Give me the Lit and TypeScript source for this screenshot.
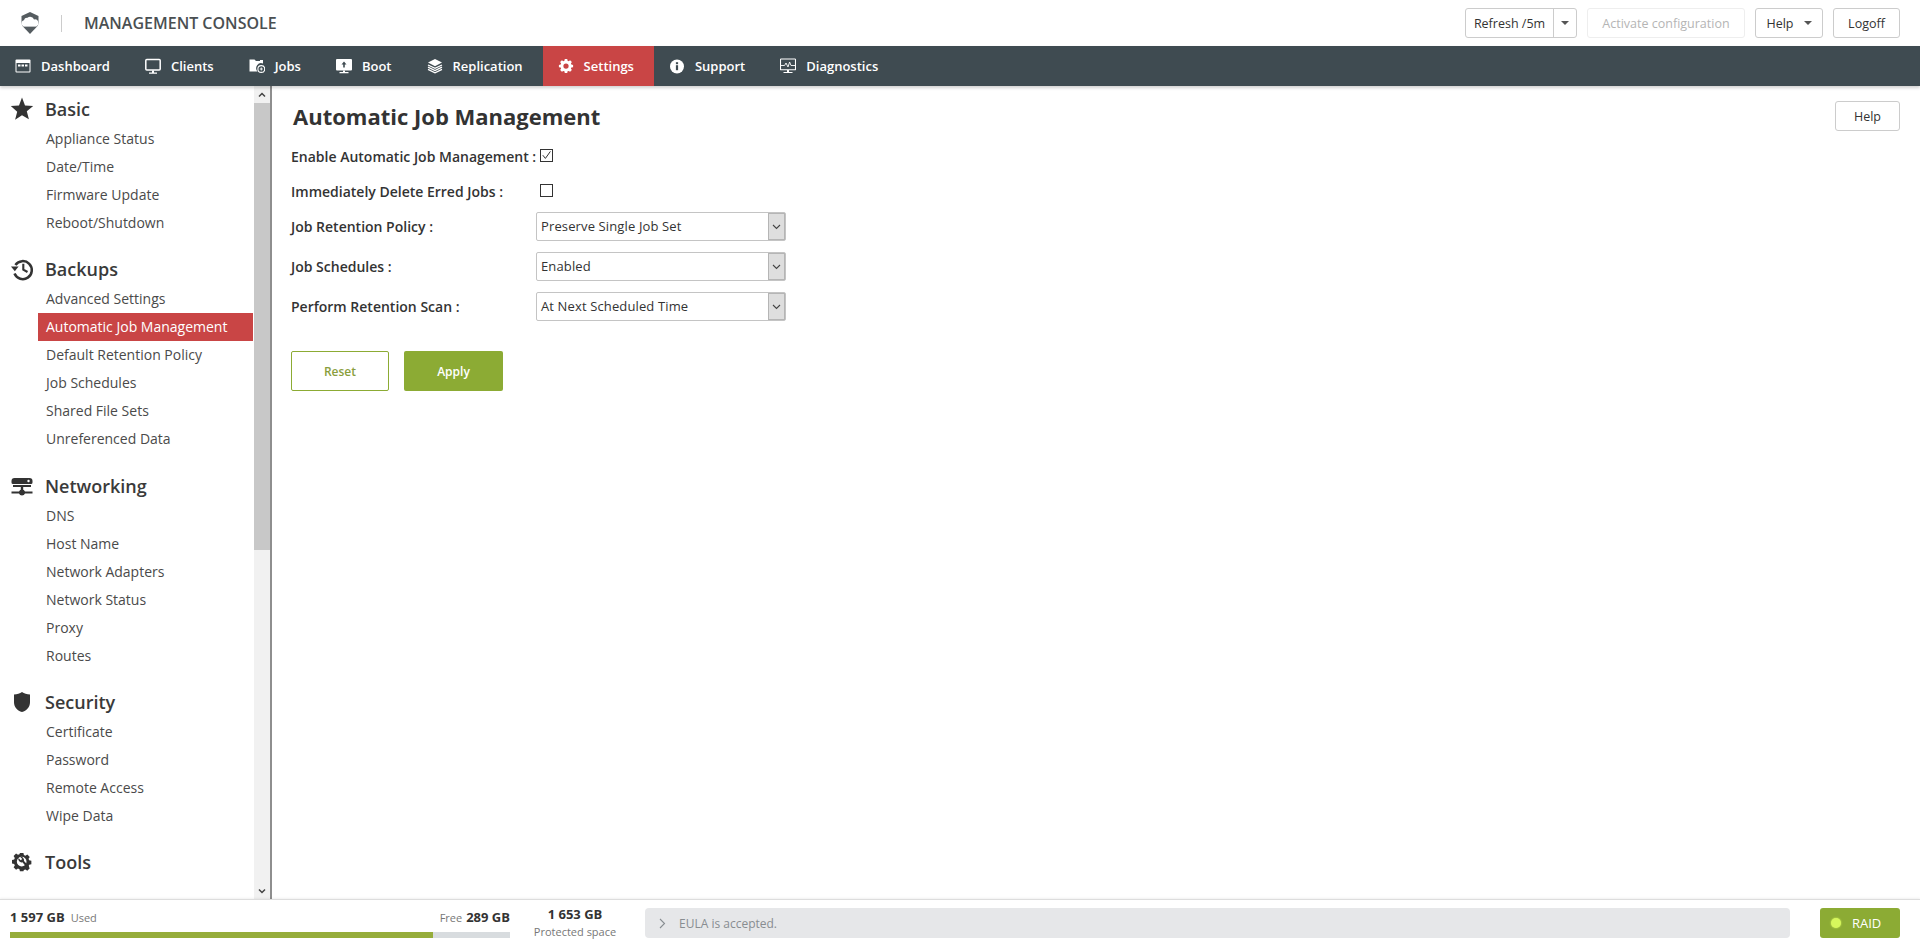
import { LitElement, html, css, svg } from "lit";
import { customElement } from "lit/decorators.js";

const navIcons: Record<string, unknown> = {
  dashboard: svg`<rect x="0.5" y="1.5" width="15" height="13" rx="1" fill="#fff"/><rect x="1.5" y="5" width="13" height="8.5" fill="#3f4b51"/><rect x="3" y="6.5" width="2.5" height="2" fill="#fff"/><rect x="6.5" y="6.500" width="2.5" height="2" fill="#fff"/><rect x="10" y="6.5" width="2.5" height="2" fill="#fff"/>`,
  clients: svg`<rect x="0.8" y="1.5" width="14.4" height="10.5" rx="1" fill="none" stroke="#fff" stroke-width="1.5"/><path d="M7 12.5h2v2H7zM4 14.500h8v1.200H4z" fill="#fff"/>`,
  jobs: svg`<path d="M0.5 1.5h5L7 3h4V2h3v3.500a5 5 0 0 0-5.500 8H.5z" fill="#fff"/><circle cx="12.300" cy="11" r="3.400" fill="none" stroke="#fff" stroke-width="1.100"/><path d="M10.800 11h3M12.300 9.500v3" stroke="#fff" stroke-width="0.900"/>`,
  boot: svg`<rect x="0" y="1" width="16" height="11.500" rx="1" fill="#fff"/><path d="M8 3.500l2.500 3H8.800v3H7.200v-3H5.500z" fill="#3f4b51"/><path d="M7 12.500h2v2H7zM3.500 14h9v1.300h-9z" fill="#fff"/>`,
  replication: svg`<path d="M8 1l7 3.600-7 3.600-7-3.600z" fill="#fff"/><path d="M1 7l7 3.400L15 7M1 9.200l7 3.400 7-3.400M1 11.400l7 3.400 7-3.400" fill="none" stroke="#fff" stroke-width="1.300"/>`,
  settings: svg`<path fill="#fff" fill-rule="evenodd" d="M6.600 1h2.800l.4 2 1.200.5 1.700-1.100 2 2-1.100 1.700.5 1.200 2 .4v2.600l-2 .4-.5 1.200 1.100 1.700-2 2-1.700-1.100-1.200.5-.4 2H6.600l-.4-2-1.200-.5-1.700 1.100-2-2 1.100-1.700-.5-1.200-2-.4V7.700l2-.4.5-1.200-1.100-1.700 2-2 1.700 1.100 1.200-.5zM8 6a3 3 0 1 0 0 6 3 3 0 0 0 0-6z" transform="translate(1 .2) scale(.875)"/>`,
  support: svg`<circle cx="8" cy="8.500" r="7" fill="#fff"/><rect x="6.900" y="7.200" width="2.200" height="5" fill="#3f4b51"/><rect x="6.900" y="4.200" width="2.200" height="2" fill="#3f4b51"/>`,
  diagnostics: svg`<rect x="0.500" y="1" width="15" height="10.800" rx="0.600" fill="none" stroke="#fff" stroke-width="1.100"/><path d="M1 7.500h3.600L6 5l2 4 1.600-5L11 7.500h4.400" fill="none" stroke="#fff" stroke-width="0.900"/><path d="M7 12h2v2H7zM3.500 14h9v1.100h-9z" fill="#fff"/>`,
};

const sideIcons: Record<string, unknown> = {
  star: svg`<path d="M11 -0.500l3 7.900 8.200.5-6.400 5.300 2.100 8.100L11 17.300l-6.900 4.500 2.100-8.100L-.2 7.900 8 7.400z" fill="#333"/>`,
  history: svg`<path d="M4.400 7a9 9 0 1 1-.9 8.600" fill="none" stroke="#333" stroke-width="2.500"/><path d="M0 8.500h7.600L3.800 13.200z" fill="#333"/><path d="M12.300 5.800v5.800l4.200 2.400" fill="none" stroke="#333" stroke-width="2.100"/>`,
  network: svg`<path d="M3.500 3h15a3 3 0 0 1 3 3v1.500A1.500 1.500 0 0 1 20 9H2A1.500 1.500 0 0 1 .5 7.500V6a3 3 0 0 1 3-3z" fill="#333"/><rect x="2" y="10" width="18" height="2" fill="#333"/><circle cx="17.500" cy="6" r="1.200" fill="#fff"/><path d="M.5 16.500H8a3.200 3.200 0 0 1 6 0h7.500v2H14a3.200 3.200 0 0 1-6 0H.5z" fill="#333"/><rect x="9.800" y="12" width="2.400" height="4" fill="#333"/>`,
  shield: svg`<path d="M11 1c2 1.600 5 2.400 8 2.600v7.600c0 4.800-3.600 8.600-8 9.800-4.400-1.200-8-5-8-9.800V3.600C6 3.400 9 2.600 11 1z" fill="#333"/>`,
  tools: svg`<g transform="translate(1 1)"><path fill="#333" fill-rule="evenodd" d="M9 1h4l.5 2.500 1.700.7 2.200-1.400 2.800 2.800-1.400 2.200.7 1.700 2.500.5v4l-2.500.5-.7 1.700 1.400 2.200-2.800 2.800-2.200-1.400-1.700.7L13 22H9l-.5-2.500-1.700-.7-2.200 1.400-2.800-2.800 1.400-2.200-.7-1.700L0 13V9l2.500-.5.7-1.700-1.400-2.200L4.600 1.800l2.200 1.400 1.700-.7zM11 5.500a5.500 5.500 0 1 0 0 11 5.500 5.500 0 0 0 0-11z" transform="scale(.88)"/><path d="M6.500 6a3.300 3.300 0 0 0 4 4.300l4.800 5.900 1.900-1.700-5.200-5.600A3.300 3.300 0 0 0 8.300 4.900l2 2-1.600 1.400z" fill="#333"/></g>`,
};

const NAV = [
  { label: "Dashboard", icon: "dashboard" },
  { label: "Clients", icon: "clients" },
  { label: "Jobs", icon: "jobs" },
  { label: "Boot", icon: "boot" },
  { label: "Replication", icon: "replication" },
  { label: "Settings", icon: "settings", active: true },
  { label: "Support", icon: "support" },
  { label: "Diagnostics", icon: "diagnostics" },
];

const GROUPS = [
  { title: "Basic", icon: "star", items: ["Appliance Status", "Date/Time", "Firmware Update", "Reboot/Shutdown"] },
  {
    title: "Backups",
    icon: "history",
    items: ["Advanced Settings", "Automatic Job Management", "Default Retention Policy", "Job Schedules", "Shared File Sets", "Unreferenced Data"],
  },
  { title: "Networking", icon: "network", items: ["DNS", "Host Name", "Network Adapters", "Network Status", "Proxy", "Routes"] },
  { title: "Security", icon: "shield", items: ["Certificate", "Password", "Remote Access", "Wipe Data"] },
  { title: "Tools", icon: "tools", items: [] as string[] },
];

@customElement("app-root")
export class AppRoot extends LitElement {
  static styles = css`
    :host {
      display: grid;
      grid-template-rows: 46px 40px 1fr 47px;
      height: 100vh;
      overflow: hidden;
      background: #fff;
      color: #333;
      font-family: "Open Sans", "Liberation Sans", sans-serif;
      font-size: 13px;
    }

    .top {
      display: flex;
      align-items: center;
      padding: 0 20px;
    }
    .logo {
      width: 20px;
      height: 22px;
      flex: none;
    }
    .sep {
      width: 1px;
      height: 17px;
      background: #ccc;
      margin: 0 22px 0 21px;
    }
    .console {
      font-size: 16px;
      font-weight: 600;
      color: #4a4f52;
      flex: 1;
    }
    .actions {
      display: flex;
      gap: 10px;
    }
    .btn {
      height: 30px;
      box-sizing: border-box;
      border: 1px solid #ccc;
      border-radius: 3px;
      display: flex;
      align-items: center;
      justify-content: center;
      font-size: 12.5px;
      color: #333;
      background: #fff;
    }
    .refresh {
      width: 112px;
    }
    .refresh .txt {
      width: 87px;
      text-align: center;
    }
    .refresh .drop {
      flex: 1;
      align-self: stretch;
      border-left: 1px solid #ccc;
      display: flex;
      align-items: center;
      justify-content: center;
    }
    .caret {
      width: 0;
      height: 0;
      border: 4px solid transparent;
      border-top: 4px solid #555;
      border-bottom: 0;
    }
    .activate {
      width: 158px;
      border-color: #eee;
      color: #b5b5b5;
    }
    .helpdrop {
      width: 68px;
      gap: 10px;
    }
    .logoff {
      width: 67px;
    }

    nav {
      display: flex;
      background: #3f4b51;
      box-shadow: 0 2px 3px rgba(0, 0, 0, 0.18);
      position: relative;
      z-index: 2;
    }
    .nav-item {
      display: flex;
      align-items: center;
      gap: 10px;
      padding: 0 20px 0 15px;
      color: #fff;
      font-weight: 600;
      font-size: 13px;
    }
    .nav-item.active {
      background: #c94545;
    }
    .nav-item svg {
      width: 16px;
      height: 16px;
      flex: none;
    }

    .body {
      display: flex;
      min-height: 0;
    }
    .side {
      width: 254px;
      flex: none;
      padding-top: 7px;
      overflow: hidden;
      box-sizing: border-box;
    }
    .group {
      margin-bottom: 16.3px;
    }
    .group-head {
      height: 32px;
      display: flex;
      align-items: center;
      gap: 12px;
      padding-left: 11px;
      font-size: 18px;
      font-weight: 600;
      color: #3a3a3a;
    }
    .group-head svg {
      width: 22px;
      height: 22px;
      flex: none;
      overflow: visible;
    }
    .side-item {
      height: 28px;
      line-height: 28px;
      margin-left: 38px;
      padding-left: 8px;
      color: #4a4a4a;
      font-size: 14px;
      white-space: nowrap;
    }
    .side-item.sel {
      background: #c94545;
      color: #fff;
      margin-right: 1px;
    }

    .scroll {
      width: 16px;
      flex: none;
      background: #f1f1f1;
      display: flex;
      flex-direction: column;
      border-right: 2px solid #8e8e8e;
    }
    .scroll .arrow {
      height: 17px;
      flex: none;
      display: flex;
      align-items: center;
      justify-content: center;
    }
    .scroll .thumb {
      height: 447px;
      flex: none;
      background: #c8c8c8;
    }
    .scroll .rest {
      flex: 1;
    }
    .scroll svg {
      width: 8px;
      height: 6px;
    }

    main {
      flex: 1;
      padding: 15px 20px 0 19px;
      min-width: 0;
    }
    .title-row {
      display: flex;
      justify-content: space-between;
      align-items: center;
      height: 30px;
      margin-bottom: 7px;
    }
    h1 {
      margin: 0 0 0 2px;
      font-size: 22px;
      font-weight: 700;
      color: #333;
    }
    .help {
      width: 65px;
    }
    .row {
      display: grid;
      grid-template-columns: 245px 250px;
      align-items: center;
      font-size: 14px;
      font-weight: 600;
      color: #333;
      white-space: nowrap;
    }
    .row.check {
      height: 35px;
    }
    .row.check > div {
      padding-top: 2px;
    }
    .row.pick {
      height: 29px;
      margin-top: 11px;
    }
    .row.check + .row.pick {
      margin-top: 4px;
    }
    .box {
      width: 13px;
      height: 13px;
      margin-left: 4px;
      box-sizing: border-box;
      border: 1px solid #333;
      display: block;
      background: #fff;
    }
    .select {
      height: 29px;
      box-sizing: border-box;
      border: 1px solid #c4c4c4;
      border-radius: 2px;
      display: flex;
      align-items: center;
      padding-left: 4px;
      font-size: 13px;
      font-weight: 400;
      letter-spacing: 0.13px;
      color: #333;
    }
    .select span {
      flex: 1;
      padding-bottom: 2px;
    }
    .select .dd {
      width: 17px;
      height: 27px;
      background: #dedede;
      border: 1px solid #b5b5b5;
      box-sizing: border-box;
      display: flex;
      align-items: center;
      justify-content: center;
    }
    .select svg {
      width: 9px;
      height: 6px;
    }
    .form-btns {
      display: flex;
      gap: 15px;
      margin-top: 30px;
    }
    .form-btns div {
      height: 40px;
      box-sizing: border-box;
      border-radius: 2px;
      display: flex;
      align-items: center;
      justify-content: center;
      font-size: 12px;
      font-weight: 600;
    }
    .reset {
      width: 98px;
      border: 1px solid #8cab34;
      color: #8a9e3c;
    }
    .apply {
      width: 99px;
      background: #8cab34;
      color: #fff;
    }

    footer {
      border-top: 1px solid #ddd;
      box-shadow: 0 -1px 2px rgba(0, 0, 0, 0.06);
      display: flex;
      align-items: center;
      padding: 0 20px 0 10px;
      position: relative;
      z-index: 2;
      background: #fff;
    }
    .usage {
      width: 500px;
      flex: none;
    }
    .usage-txt {
      display: flex;
      justify-content: space-between;
      align-items: baseline;
      height: 18px;
      margin-bottom: 5px;
      position: relative;
      top: -1px;
    }
    .small {
      font-size: 11px;
      color: #777;
      font-weight: 400;
    }
    .usage .used {
      margin-left: 6px;
    }
    .usage .free {
      margin-right: 4px;
    }
    b {
      font-size: 13px;
      font-weight: 700;
      color: #333;
    }
    .bar {
      height: 6px;
      background: #d8dcdf;
    }
    .bar div {
      height: 100%;
      background: #96ad3b;
    }
    .protected {
      width: 130px;
      margin-right: 5px;
      flex: none;
      text-align: center;
      line-height: 17px;
    }
    .eula {
      flex: 1;
      height: 30px;
      background: #e6e7e9;
      border-radius: 4px;
      display: flex;
      align-items: center;
      gap: 13px;
      padding-left: 14px;
      font-size: 12px;
      color: #888d91;
    }
    .eula svg {
      width: 7px;
      height: 11px;
    }
    .raid {
      width: 80px;
      height: 30px;
      margin-left: 30px;
      flex: none;
      background: #8cab34;
      border-radius: 3px;
      display: flex;
      align-items: center;
      gap: 11px;
      padding-left: 11px;
      box-sizing: border-box;
      color: #fff;
      font-size: 13px;
      font-weight: 400;
    }
    .dot {
      width: 10px;
      height: 10px;
      border-radius: 50%;
      background: #d6f75c;
      box-shadow: 0 0 2px #d6f75c;
    }
  `;

  private navItem(n: (typeof NAV)[number]) {
    return html`<div class="nav-item ${n.active ? "active" : ""}">
      <svg viewBox="0 0 16 16">${navIcons[n.icon]}</svg>${n.label}
    </div>`;
  }

  private group(g: (typeof GROUPS)[number]) {
    return html`<div class="group">
      <div class="group-head"><svg viewBox="0 0 22 22">${sideIcons[g.icon]}</svg>${g.title}</div>
      ${g.items.map(
        (item) =>
          html`<div class="side-item ${item === "Automatic Job Management" ? "sel" : ""}">${item}</div>`
      )}
    </div>`;
  }

  private pick(label: string, value: string) {
    return html`<div class="row pick">
      <div>${label}</div>
      <div class="select">
        <span>${value}</span>
        <div class="dd">
          <svg viewBox="0 0 9 6"><path d="M1 1l3.500 3.500L8 1" fill="none" stroke="#444" stroke-width="1.100" /></svg>
        </div>
      </div>
    </div>`;
  }

  render() {
    return html`
      <div class="top">
        <svg class="logo" viewBox="0 0 20 22">
          <path d="M10 0l8.500 4v9l-8.500 9-8.500-9V4z" fill="#555c60" />
          <path
            d="M4.500 14.500a3.200 3.200 0 0 1-.6-6.300 3.400 3.400 0 0 1 3.600-2.400A4.200 4.200 0 0 1 14 7.400a3.600 3.600 0 0 1 1.500 7.100z"
            fill="#fff"
          />
          <path d="M0.500 9.500l2 5h15l2-5v4.800H.5z" fill="#fff" />
        </svg>
        <div class="sep"></div>
        <div class="console">MANAGEMENT CONSOLE</div>
        <div class="actions">
          <div class="btn refresh">
            <div class="txt">Refresh /5m</div>
            <div class="drop"><span class="caret"></span></div>
          </div>
          <div class="btn activate">Activate configuration</div>
          <div class="btn helpdrop">Help <span class="caret"></span></div>
          <div class="btn logoff">Logoff</div>
        </div>
      </div>

      <nav>${NAV.map((n) => this.navItem(n))}</nav>

      <div class="body">
        <div class="side">${GROUPS.map((g) => this.group(g))}</div>
        <div class="scroll">
          <div class="arrow">
            <svg viewBox="0 0 8 6"><path d="M1 4.500l3-3 3 3" fill="none" stroke="#444" stroke-width="1.500" /></svg>
          </div>
          <div class="thumb"></div>
          <div class="rest"></div>
          <div class="arrow">
            <svg viewBox="0 0 8 6"><path d="M1 1.500l3 3 3-3" fill="none" stroke="#444" stroke-width="1.500" /></svg>
          </div>
        </div>
        <main>
          <div class="title-row">
            <h1>Automatic Job Management</h1>
            <div class="btn help">Help</div>
          </div>
          <div class="row check">
            <div>Enable Automatic Job Management :</div>
            <svg class="box" viewBox="0 0 11 11">
              <path d="M1.800 5.200l2.600 3.200 5-7" fill="none" stroke="#333" stroke-width="1" />
            </svg>
          </div>
          <div class="row check">
            <div>Immediately Delete Erred Jobs :</div>
            <span class="box"></span>
          </div>
          ${this.pick("Job Retention Policy :", "Preserve Single Job Set")}
          ${this.pick("Job Schedules :", "Enabled")}
          ${this.pick("Perform Retention Scan :", "At Next Scheduled Time")}
          <div class="form-btns">
            <div class="reset">Reset</div>
            <div class="apply">Apply</div>
          </div>
        </main>
      </div>

      <footer>
        <div class="usage">
          <div class="usage-txt">
            <span><b>1 597 GB</b><span class="small used">Used</span></span>
            <span><span class="small free">Free</span><b>289 GB</b></span>
          </div>
          <div class="bar"><div style="width: ${(1597 / (1597 + 289)) * 100}%"></div></div>
        </div>
        <div class="protected">
          <b>1 653 GB</b><br /><span class="small">Protected space</span>
        </div>
        <div class="eula">
          <svg viewBox="0 0 7 11"><path d="M1 1l4.500 4.500L1 10" fill="none" stroke="#888d91" stroke-width="1.100" /></svg>
          EULA is accepted.
        </div>
        <div class="raid"><span class="dot"></span>RAID</div>
      </footer>
    `;
  }
}

declare global {
  interface HTMLElementTagNameMap {
    "app-root": AppRoot;
  }
}
